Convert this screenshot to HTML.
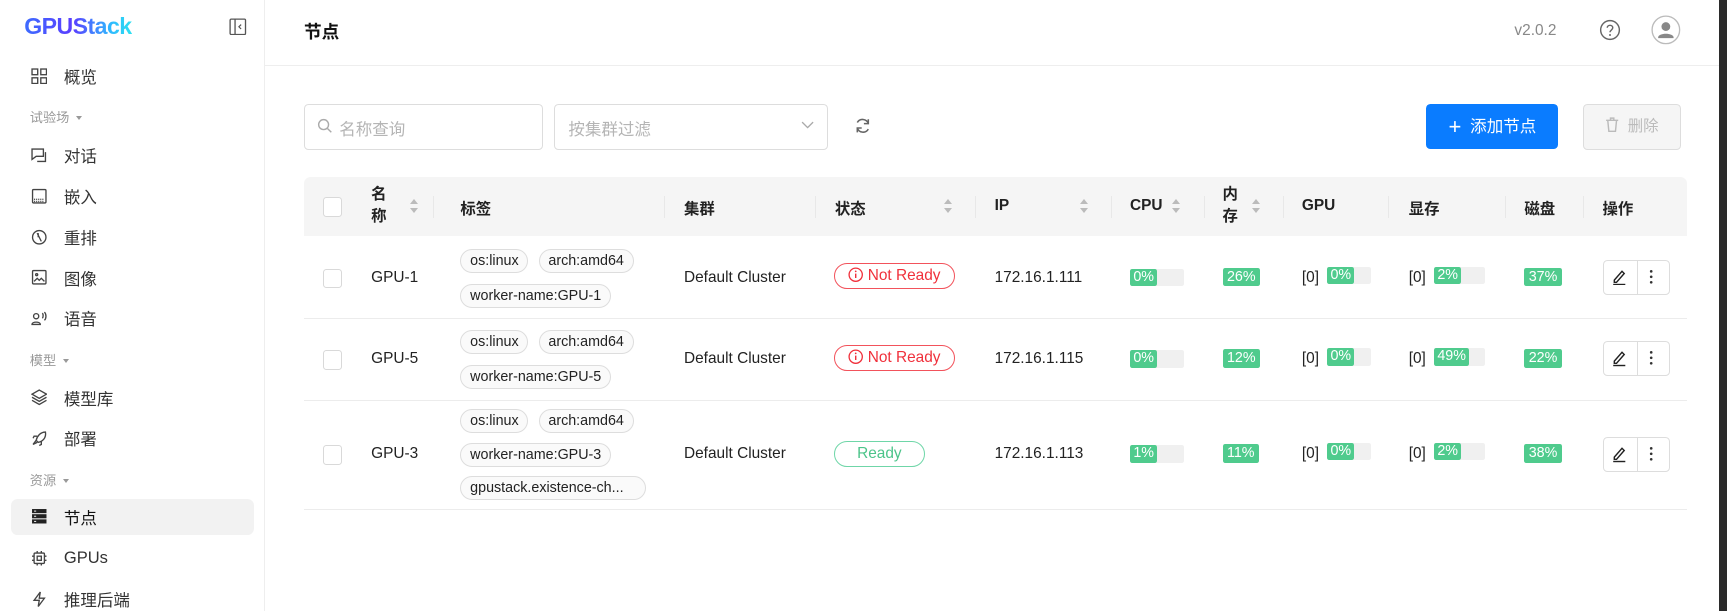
<!DOCTYPE html>
<html><head><meta charset="utf-8">
<style>
html,body{margin:0;padding:0;width:1727px;height:611px;overflow:hidden;background:#fff}
#root{position:relative;width:1568px;height:556px;zoom:1.10140;font-family:"Liberation Sans","Noto Sans CJK SC",sans-serif;color:#222;font-size:14px}
.a{position:absolute;white-space:nowrap}
.side{left:0;top:0;width:240px;height:556px;border-right:1px solid #eee;background:#fff}
.mi{position:absolute;left:28px;font-size:15px;color:#333;display:flex;align-items:center;height:20px}
.mi svg{width:15px;height:15px;margin-right:15px}
.grp{position:absolute;left:27px;font-size:12px;color:#999}
.grp:after{content:"";display:inline-block;margin-left:6px;border:3.5px solid transparent;border-top:4px solid #999;vertical-align:-1px}
.th{position:absolute;font-weight:bold;font-size:14px;color:#222}
.sort{position:absolute;width:8px;height:14px}
.sort:before{content:"";position:absolute;left:0;top:0;border:4px solid transparent;border-bottom:5px solid #bbb;border-top:0}
.sort:after{content:"";position:absolute;left:0;top:8px;border:4px solid transparent;border-top:5px solid #bbb;border-bottom:0}
.sep{position:absolute;width:1px;height:20px;background:#e8e8e8;top:178px}
.cb{position:absolute;left:293px;width:16px;height:16px;border:1px solid #d9d9d9;border-radius:3px;background:#fff}
.tag{position:absolute;height:20px;line-height:20px;border:1px solid #ddd;border-radius:11px;padding:0 8px;font-size:13px;color:#222;background:#fafafa}
.st{position:absolute;left:757px;height:22px;line-height:22px;border-radius:12px;font-size:14px;text-align:center}
.bar{position:absolute;height:16px;background:#f0f0f0;border-radius:2px}
.bar b{position:absolute;left:0;top:0;height:16px;line-height:16px;background:#4fcb8d;color:#fff;font-weight:normal;font-size:13px;padding:0 3px;border-radius:2px}
.badge{position:absolute;height:17px;line-height:17px;background:#4fcb8d;color:#fff;font-size:13px;padding:0 4px;border-radius:2px}
.act{position:absolute;left:1455px;width:59px;height:30px;border:1px solid #ddd;border-radius:4px;background:#fff}
.act i{position:absolute;left:30px;top:0;width:1px;height:30px;background:#ddd}
.row{position:absolute;left:276px;width:1256px;height:1px;background:#ececec}
</style></head><body><div id="root">
<div class="a side"></div>
<div class="a" style="left:22px;top:12px;font-size:21px;font-weight:bold;letter-spacing:-0.5px;background:linear-gradient(90deg,#3d6cff,#5a3dff 45%,#2fb8ff 80%,#2ee0f0);-webkit-background-clip:text;color:transparent">GPUStack</div>
<svg class="a" style="left:208px;top:16px" width="16" height="16" viewBox="0 0 16 16"><rect x="1" y="1" width="14" height="14" rx="1" fill="none" stroke="#555" stroke-width="1.2"/><line x1="5.5" y1="1" x2="5.5" y2="15" stroke="#555" stroke-width="1.2"/><path d="M11 6 L9 8 L11 10" fill="none" stroke="#555" stroke-width="1.1"/></svg>

<div class="mi" style="top:59px"><svg viewBox="0 0 16 16"><g fill="none" stroke="#444" stroke-width="1.3"><rect x="1" y="1" width="5.5" height="5.5"/><rect x="9.5" y="1" width="5.5" height="5.5"/><rect x="1" y="9.5" width="5.5" height="5.5"/><rect x="9.5" y="9.5" width="5.5" height="5.5"/></g></svg>概览</div>
<div class="grp" style="top:97px">试验场</div>
<div class="mi" style="top:131px"><svg viewBox="0 0 16 16"><g fill="none" stroke="#444" stroke-width="1.3"><path d="M1 2h11v7H5l-4 3z"/><path d="M14 5v9H6"/></g></svg>对话</div>
<div class="mi" style="top:168px"><svg viewBox="0 0 16 16"><g fill="none" stroke="#444" stroke-width="1.3"><rect x="1.5" y="1.5" width="13" height="13" rx="1"/><path d="M3 11h10M3 13h10" stroke-dasharray="1 1"/></g></svg>嵌入</div>
<div class="mi" style="top:205px"><svg viewBox="0 0 16 16"><g fill="none" stroke="#444" stroke-width="1.3"><circle cx="8" cy="8" r="6.5"/><path d="M6 4l4 8M7 4v4"/></g></svg>重排</div>
<div class="mi" style="top:242px"><svg viewBox="0 0 16 16"><g fill="none" stroke="#444" stroke-width="1.3"><rect x="1.5" y="1.5" width="13" height="13" rx="1"/><path d="M3 12l3-3 2 2 2-2 3 3"/><circle cx="5.5" cy="5.5" r="1"/></g></svg>图像</div>
<div class="mi" style="top:279px"><svg viewBox="0 0 16 16"><g fill="none" stroke="#444" stroke-width="1.3"><circle cx="5" cy="6" r="2.5"/><path d="M1 14c0-3 8-3 8 0z"/><path d="M11 3c1 1 1 4 0 5M13 2c2 2 2 6 0 8"/></g></svg>语音</div>
<div class="grp" style="top:318px">模型</div>
<div class="mi" style="top:351px"><svg viewBox="0 0 16 16"><g fill="none" stroke="#444" stroke-width="1.3"><path d="M8 1l7 4-7 4-7-4z"/><path d="M1 8l7 4 7-4M1 11l7 4 7-4"/></g></svg>模型库</div>
<div class="mi" style="top:388px"><svg viewBox="0 0 16 16"><g fill="none" stroke="#444" stroke-width="1.3"><path d="M14 2c-5 0-8 4-9 8l2 2c4-1 8-4 7-10z"/><path d="M5 10l-3 4 4-2M6 6H3l-1 2M10 11v3l-2 1"/></g></svg>部署</div>
<div class="grp" style="top:427px">资源</div>
<div class="a" style="left:10px;top:453px;width:221px;height:33px;background:#f2f2f2;border-radius:6px"></div>
<div class="mi" style="top:459px;color:#111"><svg viewBox="0 0 16 16"><g fill="#222"><rect x="1" y="1" width="14" height="4"/><rect x="1" y="6" width="14" height="4"/><rect x="1" y="11" width="14" height="4"/></g><g fill="#f2f2f2"><rect x="3" y="2.5" width="2" height="1"/><rect x="3" y="7.5" width="2" height="1"/><rect x="3" y="12.5" width="2" height="1"/></g></svg>节点</div>
<div class="mi" style="top:497px"><svg viewBox="0 0 16 16"><g fill="none" stroke="#444" stroke-width="1.3"><rect x="3" y="3" width="10" height="10" rx="1"/><rect x="6" y="6" width="4" height="4"/><path d="M6 1v2M10 1v2M6 13v2M10 13v2M1 6h2M1 10h2M13 6h2M13 10h2"/></g></svg>GPUs</div>
<div class="mi" style="top:534px"><svg viewBox="0 0 16 16"><path d="M9 1L3 9h5l-1 6 6-8H8z" fill="none" stroke="#444" stroke-width="1.3"/></svg>推理后端</div>

<!-- header -->
<div class="a" style="left:276px;top:17px;font-size:16px;font-weight:bold;color:#111">节点</div>
<div class="a" style="left:241px;top:59px;width:1321px;height:1px;background:#eee"></div>
<div class="a" style="left:1375px;top:20px;font-size:14px;color:#888">v2.0.2</div>
<svg class="a" style="left:1452px;top:17px" width="20" height="20" viewBox="0 0 20 20"><circle cx="10" cy="10" r="8.5" fill="none" stroke="#666" stroke-width="1.3"/><path d="M7.5 8c0-3 5-3 5 0 0 2-2.5 2-2.5 4" fill="none" stroke="#666" stroke-width="1.3"/><circle cx="10" cy="14.5" r=".9" fill="#666"/></svg>
<svg class="a" style="left:1499px;top:14px" width="27" height="27" viewBox="0 0 27 27"><circle cx="13.5" cy="13.5" r="12.5" fill="#fff" stroke="#bbb" stroke-width="1.2"/><circle cx="13.5" cy="10.5" r="4" fill="#888"/><path d="M6.5 20c1-4 13-4 14 0v1h-14z" fill="#888"/></svg>
<div class="a" style="left:1561px;top:0;width:7px;height:556px;background:#2b2b2b"></div>

<!-- toolbar -->
<div class="a" style="left:276px;top:94px;width:215px;height:40px;border:1px solid #ddd;border-radius:4px"></div>
<svg class="a" style="left:288px;top:107px" width="14" height="14" viewBox="0 0 14 14"><circle cx="6" cy="6" r="4.5" fill="none" stroke="#aaa" stroke-width="1.3"/><path d="M9.5 9.5L13 13" stroke="#aaa" stroke-width="1.3"/></svg>
<div class="a" style="left:308px;top:105px;font-size:15px;color:#b5b5b5">名称查询</div>
<div class="a" style="left:503px;top:94px;width:247px;height:40px;border:1px solid #ddd;border-radius:4px"></div>
<div class="a" style="left:516px;top:105px;font-size:15px;color:#b5b5b5">按集群过滤</div>
<svg class="a" style="left:727px;top:110px" width="12" height="8" viewBox="0 0 12 8"><path d="M1 1l5 5 5-5" fill="none" stroke="#aaa" stroke-width="1.2"/></svg>
<svg class="a" style="left:775px;top:106px" width="16" height="16" viewBox="0 0 16 16"><g fill="none" stroke="#666" stroke-width="1.4"><path d="M13 6A5.5 5.5 0 0 0 3 5"/><path d="M3 10a5.5 5.5 0 0 0 10 1"/><path d="M13 2v4H9"/><path d="M3 14v-4h4"/></g></svg>
<div class="a" style="left:1295px;top:94px;width:120px;height:41px;background:#0a7cff;border-radius:4px;color:#fff;font-size:15px;line-height:41px;text-align:center"><span style="font-size:20px;font-weight:300;vertical-align:-2px;margin-right:8px">+</span>添加节点</div>
<div class="a" style="left:1437px;top:94px;width:87px;height:40px;background:#f5f5f5;border:1px solid #ddd;border-radius:4px;color:#bbb;font-size:14px;line-height:40px;text-align:center"><svg width="13" height="14" viewBox="0 0 13 14" style="vertical-align:-2px;margin-right:8px"><g fill="none" stroke="#bbb" stroke-width="1.3"><path d="M1 3h11M5 3V1h3v2M2.5 3l1 10h6l1-10"/></g></svg>删除</div>

<!-- table header -->
<div class="a" style="left:276px;top:161px;width:1256px;height:53px;background:#f5f5f5;border-radius:6px 6px 0 0"></div>
<div class="cb" style="top:179px"></div>
<div class="th" style="left:337px;top:167px;line-height:20px">名<br>称</div><div class="sort" style="left:372px;top:181px"></div>
<div class="sep" style="left:393px"></div>
<div class="th" style="left:418px;top:179px">标签</div>
<div class="sep" style="left:603px"></div>
<div class="th" style="left:621px;top:179px">集群</div>
<div class="sep" style="left:740px"></div>
<div class="th" style="left:758px;top:179px">状态</div><div class="sort" style="left:857px;top:181px"></div>
<div class="sep" style="left:885px"></div>
<div class="th" style="left:903px;top:179px">IP</div><div class="sort" style="left:981px;top:181px"></div>
<div class="sep" style="left:1009px"></div>
<div class="th" style="left:1026px;top:179px">CPU</div><div class="sort" style="left:1064px;top:181px"></div>
<div class="sep" style="left:1093px"></div>
<div class="th" style="left:1110px;top:167px;line-height:20px">内<br>存</div><div class="sort" style="left:1137px;top:181px"></div>
<div class="sep" style="left:1165px"></div>
<div class="th" style="left:1182px;top:179px">GPU</div>
<div class="sep" style="left:1260px"></div>
<div class="th" style="left:1279px;top:179px">显存</div>
<div class="sep" style="left:1366px"></div>
<div class="th" style="left:1384px;top:179px">磁盘</div>
<div class="sep" style="left:1437px"></div>
<div class="th" style="left:1455px;top:179px">操作</div>

<!-- row 1 -->
<div class="cb" style="top:244px"></div>
<div class="a" style="left:337px;top:244px">GPU-1</div>
<div class="tag" style="left:418px;top:226px">os:linux</div>
<div class="tag" style="left:489px;top:226px">arch:amd64</div>
<div class="tag" style="left:418px;top:258px">worker-name:GPU-1</div>
<div class="a" style="left:621px;top:244px">Default Cluster</div>
<div class="st" style="top:239px;width:108px;border:1px solid #f2525b;color:#f0303b"><svg width="14" height="14" viewBox="0 0 14 14" style="vertical-align:-2px;margin-right:4px"><circle cx="7" cy="7" r="6" fill="none" stroke="#f0303b" stroke-width="1.2"/><path d="M7 6v4" stroke="#f0303b" stroke-width="1.3"/><circle cx="7" cy="4" r=".8" fill="#f0303b"/></svg>Not Ready</div>
<div class="a" style="left:903px;top:244px">172.16.1.111</div>
<div class="bar" style="left:1026px;top:244px;width:49px"><b>0%</b></div>
<div class="badge" style="left:1110px;top:243px">26%</div>
<div class="a" style="left:1182px;top:244px">[0]</div><div class="bar" style="left:1205px;top:242px;width:40px"><b>0%</b></div>
<div class="a" style="left:1279px;top:244px">[0]</div><div class="bar" style="left:1302px;top:242px;width:46px"><b>2%</b></div>
<div class="badge" style="left:1384px;top:243px">37%</div>
<div class="act" style="top:236px"><i></i></div>
<div class="row" style="top:289px"></div>

<!-- row 2 -->
<div class="cb" style="top:318px"></div>
<div class="a" style="left:337px;top:318px">GPU-5</div>
<div class="tag" style="left:418px;top:300px">os:linux</div>
<div class="tag" style="left:489px;top:300px">arch:amd64</div>
<div class="tag" style="left:418px;top:331px">worker-name:GPU-5</div>
<div class="a" style="left:621px;top:318px">Default Cluster</div>
<div class="st" style="top:313px;width:108px;border:1px solid #f2525b;color:#f0303b"><svg width="14" height="14" viewBox="0 0 14 14" style="vertical-align:-2px;margin-right:4px"><circle cx="7" cy="7" r="6" fill="none" stroke="#f0303b" stroke-width="1.2"/><path d="M7 6v4" stroke="#f0303b" stroke-width="1.3"/><circle cx="7" cy="4" r=".8" fill="#f0303b"/></svg>Not Ready</div>
<div class="a" style="left:903px;top:318px">172.16.1.115</div>
<div class="bar" style="left:1026px;top:318px;width:49px"><b>0%</b></div>
<div class="badge" style="left:1110px;top:317px">12%</div>
<div class="a" style="left:1182px;top:318px">[0]</div><div class="bar" style="left:1205px;top:316px;width:40px"><b>0%</b></div>
<div class="a" style="left:1279px;top:318px">[0]</div><div class="bar" style="left:1302px;top:316px;width:46px"><b>49%</b></div>
<div class="badge" style="left:1384px;top:317px">22%</div>
<div class="act" style="top:310px"><i></i></div>
<div class="row" style="top:363px"></div>

<!-- row 3 -->
<div class="cb" style="top:404px"></div>
<div class="a" style="left:337px;top:404px">GPU-3</div>
<div class="tag" style="left:418px;top:371px">os:linux</div>
<div class="tag" style="left:489px;top:371px">arch:amd64</div>
<div class="tag" style="left:418px;top:402px">worker-name:GPU-3</div>
<div class="tag" style="left:418px;top:432px;width:151px">gpustack.existence-ch...</div>
<div class="a" style="left:621px;top:404px">Default Cluster</div>
<div class="st" style="top:400px;width:81px;border:1px solid #6fd6a8;color:#4cc48a">Ready</div>
<div class="a" style="left:903px;top:404px">172.16.1.113</div>
<div class="bar" style="left:1026px;top:404px;width:49px"><b>1%</b></div>
<div class="badge" style="left:1110px;top:403px">11%</div>
<div class="a" style="left:1182px;top:404px">[0]</div><div class="bar" style="left:1205px;top:402px;width:40px"><b>0%</b></div>
<div class="a" style="left:1279px;top:404px">[0]</div><div class="bar" style="left:1302px;top:402px;width:46px"><b>2%</b></div>
<div class="badge" style="left:1384px;top:403px">38%</div>
<div class="act" style="top:397px"><i></i></div>
<div class="row" style="top:462px"></div>

<!-- action icons -->
<svg class="a" style="left:1463px;top:243px" width="15" height="16" viewBox="0 0 15 16"><g fill="none" stroke="#222" stroke-width="1.3"><path d="M3 11l7-8 2 2-7 8H3z"/><path d="M2 15h11"/></g></svg>
<svg class="a" style="left:1497px;top:243px" width="4" height="16" viewBox="0 0 4 16"><g fill="#333"><circle cx="2" cy="3" r="1.2"/><circle cx="2" cy="8" r="1.2"/><circle cx="2" cy="13" r="1.2"/></g></svg>
<svg class="a" style="left:1463px;top:317px" width="15" height="16" viewBox="0 0 15 16"><g fill="none" stroke="#222" stroke-width="1.3"><path d="M3 11l7-8 2 2-7 8H3z"/><path d="M2 15h11"/></g></svg>
<svg class="a" style="left:1497px;top:317px" width="4" height="16" viewBox="0 0 4 16"><g fill="#333"><circle cx="2" cy="3" r="1.2"/><circle cx="2" cy="8" r="1.2"/><circle cx="2" cy="13" r="1.2"/></g></svg>
<svg class="a" style="left:1463px;top:404px" width="15" height="16" viewBox="0 0 15 16"><g fill="none" stroke="#222" stroke-width="1.3"><path d="M3 11l7-8 2 2-7 8H3z"/><path d="M2 15h11"/></g></svg>
<svg class="a" style="left:1497px;top:404px" width="4" height="16" viewBox="0 0 4 16"><g fill="#333"><circle cx="2" cy="3" r="1.2"/><circle cx="2" cy="8" r="1.2"/><circle cx="2" cy="13" r="1.2"/></g></svg>
</div></body></html>
